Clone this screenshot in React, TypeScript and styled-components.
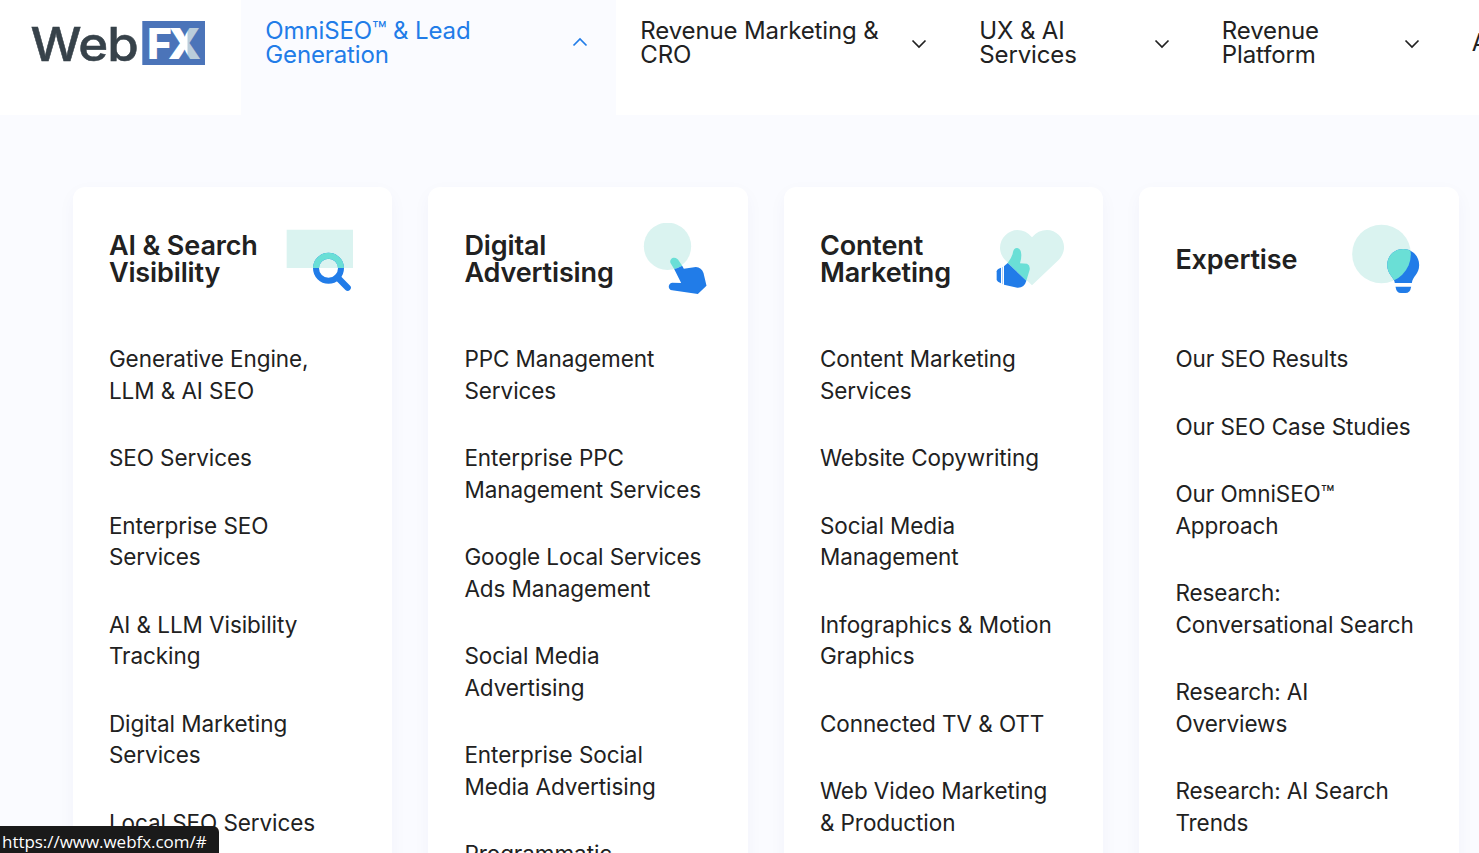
import React, { useState } from "react";
import styled, { createGlobalStyle } from "styled-components";

const GlobalStyle = createGlobalStyle`
  * {
    box-sizing: border-box;
  }

  body {
    margin: 0;
    background: #fafbff;
    color: #212121;
    font-family: "Inter", sans-serif;
    overflow: hidden;
  }
`;

const Page = styled.div`
  height: 100vh;
  overflow: hidden;
`;

const Header = styled.header`
  display: flex;
  width: 100%;
  height: 115px;
  overflow: hidden;
  background: #fff;
`;

const LogoLink = styled.a`
  flex: 0 0 241px;
  padding: 18px 0 0 28px;
`;

const NavItem = styled.button<{ $width: number; $active?: boolean }>`
  flex: 0 0 ${(props) => props.$width}px;
  display: flex;
  align-items: flex-start;
  justify-content: space-between;
  padding: 19px 28px 0 24.3px;
  border: none;
  background: ${(props) => (props.$active ? "#fafbff" : "#fff")};
  color: ${(props) => (props.$active ? "#217ce8" : "#212121")};
  font-family: inherit;
  font-size: 24px;
  line-height: 24px;
  letter-spacing: -0.13px;
  text-align: left;
  cursor: pointer;
`;

const NavLabel = styled.span`
  display: flex;
  align-items: center;
  min-height: 48px;
  white-space: pre-line;
`;

const Chevron = styled.svg<{ $open?: boolean }>`
  flex: none;
  width: 16px;
  height: 10px;
  margin-top: ${(props) => (props.$open ? 18 : 20)}px;
  transform: ${(props) => (props.$open ? "rotate(180deg)" : "none")};
`;

const MegaMenu = styled.main`
  display: grid;
  grid-template-columns: repeat(4, 319.5px);
  gap: 36px;
  padding: 72px 0 0 72.9px;
`;

const MenuCard = styled.section`
  height: 760px;
  padding: 36px;
  border-radius: 12px;
  background: #fff;
  box-shadow: 0 6px 18px rgba(33, 60, 120, 0.04);
`;

const CardHeader = styled.div`
  display: flex;
  align-items: center;
  justify-content: space-between;
  height: 72px;
  margin-bottom: 48px;

  svg {
    flex: none;
  }
`;

const CardTitle = styled.h2`
  margin: 0;
  font-size: 27px;
  font-weight: 600;
  line-height: 27px;
  letter-spacing: -0.13px;
  white-space: pre-line;
`;

const LinkList = styled.ul`
  display: flex;
  flex-direction: column;
  gap: 36px;
  margin: 0;
  padding: 0;
  list-style: none;
`;

const MenuLink = styled.a`
  display: block;
  font-size: 22.5px;
  line-height: 31.5px;
  letter-spacing: -0.07px;
  white-space: pre;
  cursor: pointer;
`;

const StatusBar = styled.div`
  position: fixed;
  left: 0;
  bottom: 0;
  width: 219px;
  height: 27px;
  padding-left: 2px;
  border-top-right-radius: 6px;
  background: #1a1a1a;
  color: #fff;
  font-family: "Open Sans", sans-serif;
  font-size: 17px;
  line-height: 32px;
  letter-spacing: -0.04px;
  white-space: nowrap;
`;

const Logo = () => (
  <svg width="180" height="50" viewBox="28 18 180 50">
    <defs>
      <linearGradient id="x-fill" gradientUnits="userSpaceOnUse" x1="187" y1="0" x2="188" y2="0">
        <stop offset="0" stopColor="#fff" />
        <stop offset="1" stopColor="#bacddb" />
      </linearGradient>
    </defs>
    <text
      x="30.5"
      y="60.7"
      textLength="107.5"
      lengthAdjust="spacingAndGlyphs"
      fontFamily="Inter"
      fontWeight="500"
      fontSize="47"
      letterSpacing="-0.8"
      fill="#37424a"
      stroke="#37424a"
      strokeWidth="0.5"
    >
      Web
    </text>
    <rect x="142.3" y="21" width="62.7" height="44" fill="#4b74b9" />
    <text x="147" y="59" textLength="25" lengthAdjust="spacingAndGlyphs" fontFamily="Inter" fontWeight="800" fontSize="43" fill="#fff">
      F
    </text>
    <text x="168" y="59" textLength="33" lengthAdjust="spacingAndGlyphs" fontFamily="Inter" fontWeight="900" fontSize="43" fill="url(#x-fill)">
      X
    </text>
  </svg>
);

const SearchIcon = () => (
  <svg width="72" height="72" viewBox="42 24 216 216" fill="none">
    <defs>
      <clipPath id="search-top">
        <path d="M50 44H249V159H50Z" />
      </clipPath>
    </defs>
    <path d="M50 44H249V159H50Z" fill="#daf3f0" />
    <path d="M202 187L233 218" stroke="#217ce8" strokeWidth="19" strokeLinecap="round" />
    <circle cx="175.5" cy="160" r="37.5" stroke="#217ce8" strokeWidth="18" />
    <circle cx="175.5" cy="160" r="37.5" stroke="#6adfd6" strokeWidth="18" clipPath="url(#search-top)" />
  </svg>
);

const PointerIcon = () => (
  <svg width="72" height="72" viewBox="29.5 24 216 216">
    <circle cx="112" cy="94" r="71" fill="#daf3f0" />
    <path d="M132 162L121 144C118 134 125 128 132 128C139 128 143 132 146 137L156 152Q144 159 132 162Z" fill="#6adfd6" />
    <path d="M132 162Q144 159 156 152L161 161L197 156Q214 157 220 174L229 212L203 237L126 226C113 224 112 206 126 203L153 204Z" fill="#217ce8" />
  </svg>
);

const ThumbIcon = () => (
  <svg width="72" height="72" viewBox="45 24 216 216">
    <path d="M156 211L76 136C38 94 75 45 112 45Q138 45 156 67Q174 45 201 45C240 45 274 94 235 136Z" fill="#daf3f0" />
    <path d="M83 144Q97 126 99 111Q102 98 112 99Q124 102 124 120Q124 134 120 145L141 146Q151 151 149 164L139 197Z" fill="#6adfd6" />
    <path d="M83 144L139 197Q133 219 112 218L72 209V154Z" fill="#217ce8" />
    <path d="M63 158V205Q52 201 50 195V169Q51 162 63 158Z" fill="#217ce8" />
    <path d="M66 157L69 155V208L66 207Z" fill="#217ce8" opacity=".35" />
  </svg>
);

const BulbIcon = () => (
  <svg width="72" height="72" viewBox="47.5 24 216 216">
    <defs>
      <clipPath id="bulb-shade">
        <circle cx="139" cy="117" r="88" />
      </clipPath>
    </defs>
    <circle cx="139" cy="117" r="88" fill="#daf3f0" />
    <path d="M179 204C178 188 156 178 156 150C156 123 177 102 204 102C231 102 252 123 252 150C252 178 232 184 230 204Z" fill="#217ce8" />
    <path d="M179 204C178 188 156 178 156 150C156 123 177 102 204 102C231 102 252 123 252 150C252 178 232 184 230 204Z" fill="#6adfd6" clipPath="url(#bulb-shade)" />
    <path d="M178 205H231V214H178Z" fill="#fff" />
    <path d="M181 215H228Q225 234 211 234H197Q184 234 181 215Z" fill="#217ce8" />
  </svg>
);

const navItems = [
  { label: "OmniSEO™ & Lead\nGeneration", width: 375 },
  { label: "Revenue Marketing &\nCRO", width: 339 },
  { label: "UX & AI\nServices", width: 242.5 },
  { label: "Revenue\nPlatform", width: 250 },
  { label: "About", width: 200 },
];

const columns = [
  {
    title: "AI & Search\nVisibility",
    icon: <SearchIcon />,
    links: [
      "Generative Engine,\nLLM & AI SEO",
      "SEO Services",
      "Enterprise SEO\nServices",
      "AI & LLM Visibility\nTracking",
      "Digital Marketing\nServices",
      "Local SEO Services",
    ],
  },
  {
    title: "Digital\nAdvertising",
    icon: <PointerIcon />,
    links: [
      "PPC Management\nServices",
      "Enterprise PPC\nManagement Services",
      "Google Local Services\nAds Management",
      "Social Media\nAdvertising",
      "Enterprise Social\nMedia Advertising",
      "Programmatic",
    ],
  },
  {
    title: "Content\nMarketing",
    icon: <ThumbIcon />,
    links: [
      "Content Marketing\nServices",
      "Website Copywriting",
      "Social Media\nManagement",
      "Infographics & Motion\nGraphics",
      "Connected TV & OTT",
      "Web Video Marketing\n& Production",
    ],
  },
  {
    title: "Expertise",
    icon: <BulbIcon />,
    links: [
      "Our SEO Results",
      "Our SEO Case Studies",
      "Our OmniSEO™\nApproach",
      "Research:\nConversational Search",
      "Research: AI\nOverviews",
      "Research: AI Search\nTrends",
    ],
  },
];

const App: React.FC = () => {
  const [openItem, setOpenItem] = useState(0);

  return (
    <Page>
      <GlobalStyle />
      <Header>
        <LogoLink>
          <Logo />
        </LogoLink>
        {navItems.map((item, index) => (
          <NavItem
            key={item.label}
            $width={item.width}
            $active={index === openItem}
            onClick={() => setOpenItem(index)}
          >
            <NavLabel>{item.label}</NavLabel>
            <Chevron $open={index === openItem} viewBox="0 0 16 10" fill="none">
              <path d="M1.5 1.5L8 8L14.5 1.5" stroke="currentColor" strokeWidth="1.7" />
            </Chevron>
          </NavItem>
        ))}
      </Header>

      <MegaMenu>
        {columns.map((column) => (
          <MenuCard key={column.title}>
            <CardHeader>
              <CardTitle>{column.title}</CardTitle>
              {column.icon}
            </CardHeader>
            <LinkList>
              {column.links.map((link) => (
                <li key={link}>
                  <MenuLink>{link}</MenuLink>
                </li>
              ))}
            </LinkList>
          </MenuCard>
        ))}
      </MegaMenu>

      <StatusBar>https://www.webfx.com/#</StatusBar>
    </Page>
  );
};

export default App;
